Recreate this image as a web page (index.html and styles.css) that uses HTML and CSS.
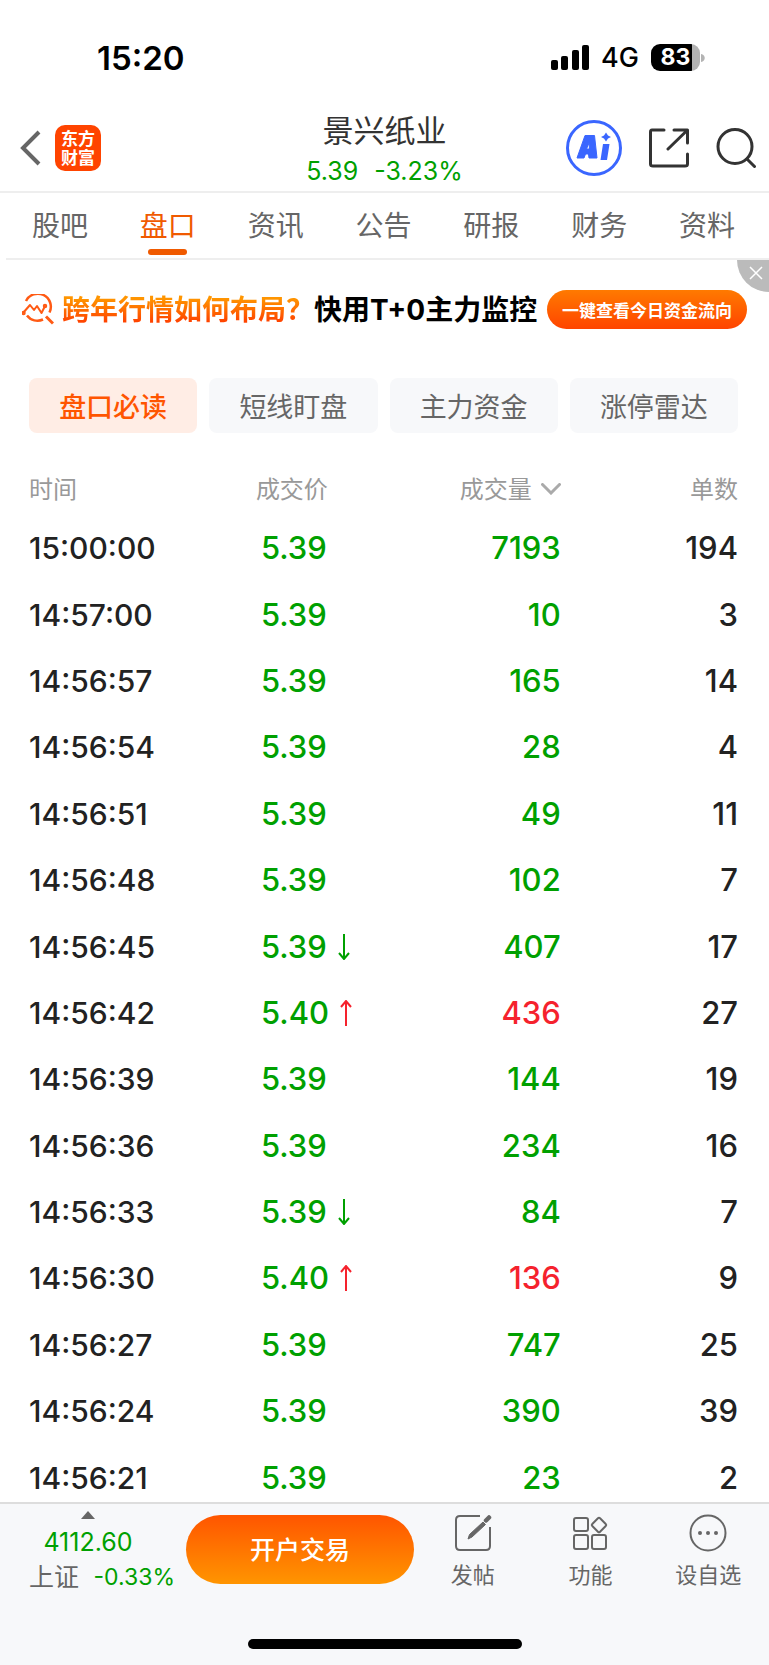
FILE: index.html
```html
<!DOCTYPE html>
<html lang="zh-CN">
<head>
    <meta charset="UTF-8">
    <meta name="viewport" content="width=device-width, initial-scale=1.0">
    <title>景兴纸业 - 盘口</title>
    <link rel="stylesheet" href="styles.css">
</head>
<body>
    <div class="status-bar">
        <span class="clock">15:20</span>
        <div class="status-right">
            <svg width="38" height="25" viewBox="0 0 38 25">
                <rect x="0" y="15" width="7" height="10" rx="2"/>
                <rect x="10" y="11" width="7" height="14" rx="2"/>
                <rect x="21" y="5" width="7" height="20" rx="2"/>
                <rect x="31" y="0" width="7" height="25" rx="2"/>
            </svg>
            <span class="network">4G</span>
            <div class="battery">83</div>
            <svg class="battery-tip" width="4" height="8" viewBox="0 0 4 8"><path d="M0 0C5 1 5 7 0 8Z"/></svg>
        </div>
    </div>

    <header class="header">
        <div class="header-side header-back">
            <button class="icon-btn" aria-label="返回">
                <svg width="22" height="36" viewBox="0 0 22 36" fill="none" stroke="#666" stroke-width="4"><path d="M19 2L3 18L19 34"/></svg>
            </button>
            <a class="logo" href="#">东方<br>财富</a>
        </div>
        <div class="header-title">
            <h1>景兴纸业</h1>
            <p><span>5.39</span><span>-3.23%</span></p>
        </div>
        <div class="header-side header-actions">
            <button class="icon-btn" aria-label="AI">
                <svg width="56" height="56" viewBox="0 0 56 56" fill="#3a66ff">
                    <circle cx="28" cy="28" r="26.5" fill="none" stroke="#3a66ff" stroke-width="3"/>
                    <path fill-rule="evenodd" stroke="#3a66ff" stroke-linejoin="round" d="M19 15.500H28.500L31 38H23L22.500 34H19.500L18 38H11ZM23 23L20.500 29H23.500Z"/>
                    <path d="M37 24H43.500L41 40H34.500ZM40 12.500L42 15.500L45 17L42 18.500L40 21.500L38 18.500L35 17L38 15.500Z"/>
                </svg>
            </button>
            <button class="icon-btn" aria-label="分享">
                <svg width="40" height="40" viewBox="0 0 40 40" fill="none" stroke="#333" stroke-width="3" stroke-linecap="round" stroke-linejoin="round">
                    <path d="M15 2H3Q1.500 2 1.500 4V36Q1.500 38 4 38H36Q38.500 38 38.500 36V26M25 2H38.500V15M38 2.500L19 21"/>
                </svg>
            </button>
            <button class="icon-btn" aria-label="搜索">
                <svg width="40" height="40" viewBox="0 0 40 40" fill="none" stroke="#333" stroke-width="3" stroke-linecap="round">
                    <circle cx="19" cy="18.500" r="17"/><path d="M31 31L38.500 38.500"/>
                </svg>
            </button>
        </div>
    </header>

    <nav class="nav">
        <a href="#">股吧</a>
        <a href="#" class="active">盘口</a>
        <a href="#">资讯</a>
        <a href="#">公告</a>
        <a href="#">研报</a>
        <a href="#">财务</a>
        <a href="#">资料</a>
    </nav>

    <section class="banner">
        <svg width="32" height="31" viewBox="0 0 32 31" fill="none" stroke="#ff5a14" stroke-width="2.500" stroke-linejoin="round">
            <path d="M4 7A13 13 0 0 1 27.500 18.500M5 21.500A13 13 0 0 0 21 25.500"/>
            <path d="M24 22.500L31 29.500" stroke-width="3"/>
            <path d="M1 19L8 11L12 16L15 12L19.500 19L23 12" stroke-width="2"/>
            <circle cx="1.500" cy="19" r="1"/><circle cx="23" cy="12" r="1"/>
        </svg>
        <strong class="banner-hot">跨年行情如何布局？</strong>
        <strong class="banner-text">快用T+0主力监控</strong>
        <button class="banner-btn">一键查看今日资金流向</button>
        <button class="banner-close" aria-label="关闭">
            <svg width="14" height="14" viewBox="0 0 14 14" stroke="#fff" stroke-width="1.500"><path d="M1 1L13 13M13 1L1 13"/></svg>
        </button>
    </section>

    <div class="tabs">
        <button class="active">盘口必读</button>
        <button>短线盯盘</button>
        <button>主力资金</button>
        <button>涨停雷达</button>
    </div>

    <table class="deals">
        <thead>
            <tr>
                <th>时间</th>
                <th>成交价</th>
                <th>成交量<svg class="sort" width="20" height="12" viewBox="0 0 20 12" fill="none" stroke="#aaa" stroke-width="3" stroke-linecap="round"><path d="M1.500 1.500L10 10L18.500 1.500"/></svg></th>
                <th>单数</th>
            </tr>
        </thead>
        <tbody>
            <tr><td>15:00:00</td><td>5.39</td><td>7193</td><td>194</td></tr>
            <tr><td>14:57:00</td><td>5.39</td><td>10</td><td>3</td></tr>
            <tr><td>14:56:57</td><td>5.39</td><td>165</td><td>14</td></tr>
            <tr><td>14:56:54</td><td>5.39</td><td>28</td><td>4</td></tr>
            <tr><td>14:56:51</td><td>5.39</td><td>49</td><td>11</td></tr>
            <tr><td>14:56:48</td><td>5.39</td><td>102</td><td>7</td></tr>
            <tr><td>14:56:45</td><td>5.39<svg class="arrow" width="12" height="26" viewBox="0 0 12 26"><path d="M6 0V25M1 19L6 25L11 19"/></svg></td><td>407</td><td>17</td></tr>
            <tr><td>14:56:42</td><td>5.40<svg class="arrow up" width="12" height="26" viewBox="0 0 12 26"><path d="M6 26V1M1 7L6 1L11 7"/></svg></td><td class="up">436</td><td>27</td></tr>
            <tr><td>14:56:39</td><td>5.39</td><td>144</td><td>19</td></tr>
            <tr><td>14:56:36</td><td>5.39</td><td>234</td><td>16</td></tr>
            <tr><td>14:56:33</td><td>5.39<svg class="arrow" width="12" height="26" viewBox="0 0 12 26"><path d="M6 0V25M1 19L6 25L11 19"/></svg></td><td>84</td><td>7</td></tr>
            <tr><td>14:56:30</td><td>5.40<svg class="arrow up" width="12" height="26" viewBox="0 0 12 26"><path d="M6 26V1M1 7L6 1L11 7"/></svg></td><td class="up">136</td><td>9</td></tr>
            <tr><td>14:56:27</td><td>5.39</td><td>747</td><td>25</td></tr>
            <tr><td>14:56:24</td><td>5.39</td><td>390</td><td>39</td></tr>
            <tr><td>14:56:21</td><td>5.39</td><td>23</td><td>2</td></tr>
        </tbody>
    </table>

    <footer class="footer">
        <div class="toolbar">
            <div class="index">
                <svg width="14" height="8" viewBox="0 0 14 8" fill="#666"><path d="M7 0L14 8H0Z"/></svg>
                <span class="index-value">4112.60</span>
                <div class="index-row"><span class="index-name">上证</span><span class="index-change">-0.33%</span></div>
            </div>
            <button class="trade-btn">开户交易</button>
            <div class="tools">
                <a href="#">
                    <svg width="38" height="38" viewBox="0 0 38 38" fill="none" stroke="#666" stroke-width="2">
                        <path d="M26 2H6Q2 2 2 6V32Q2 36 6 36H32Q36 36 36 32V13"/>
                        <path d="M14 25L15.500 20.500L29 8L31.500 10.500L18 23Z" fill="#666" stroke-width="1"/>
                        <path d="M32 6.500L35 3.500" stroke-width="4.500" stroke-linecap="round"/>
                    </svg>
                    发帖
                </a>
                <a href="#">
                    <svg width="38" height="38" viewBox="0 0 38 38" fill="none" stroke="#666" stroke-width="2">
                        <rect x="3" y="4" width="14" height="13" rx="2"/>
                        <rect x="3" y="21" width="14" height="14" rx="2"/>
                        <rect x="21" y="21" width="14" height="14" rx="2"/>
                        <rect x="22.500" y="5.500" width="11" height="11" rx="1.500" transform="rotate(45 28 11)"/>
                    </svg>
                    功能
                </a>
                <a href="#">
                    <svg width="38" height="38" viewBox="0 0 38 38" fill="#666">
                        <circle cx="19" cy="19" r="17.500" fill="none" stroke="#666" stroke-width="2"/>
                        <circle cx="11" cy="19" r="2"/><circle cx="19" cy="19" r="2"/><circle cx="27" cy="19" r="2"/>
                    </svg>
                    设自选
                </a>
            </div>
        </div>
        <div class="home-bar"></div>
    </footer>
</body>
</html>
```
FILE: styles.css
```css
* {
    box-sizing: border-box;
}
body {
    margin: 0;
    padding-bottom: 154px; /* place for the fixed footer */
    background: #fff;
    color: #222;
    font-family: Inter, "Noto Sans CJK SC", sans-serif;
}
button {
    border: 0;
    padding: 0;
    background: none;
    font-family: inherit;
    cursor: pointer;
}
a {
    text-decoration: none;
}
svg {
    display: block;
    flex: none;
}

/* status bar */
.status-bar {
    display: flex;
    justify-content: space-between;
    align-items: center;
    height: 104px;
    padding: 11px 64px 0 97px;
    color: #000;
}
.clock {
    font-size: 33px;
    font-weight: 600;
}
.status-right {
    display: flex;
    align-items: center;
}
.network {
    margin: 0 12px;
    font-size: 27px;
    font-weight: 500;
}
.battery {
    width: 49px;
    height: 27px;
    border-radius: 9px;
    background: linear-gradient(to right, #000 83%, #b3b3b3 83%);
    color: #fff;
    font-size: 23px;
    font-weight: 700;
    line-height: 27px;
    text-align: center;
}
.battery-tip {
    margin-left: 1px;
    fill: #b3b3b3;
}

/* header */
.header {
    display: flex;
    align-items: center;
    height: 89px;
    padding: 0 13px;
    border-bottom: 2px solid #eee;
}
.header-side {
    display: flex;
    flex: 1;
    align-items: center;
    gap: 13px;
}
.header-back {
    padding-left: 7px;
}
.header-actions {
    justify-content: flex-end;
    gap: 27px;
}
/* both sides share the free space, so the title stays centered */
.header-back,
.header-actions {
    flex-basis: 200px;
}
.logo {
    width: 46px;
    height: 46px;
    padding-top: 5px;
    border-radius: 10px;
    background: #ff4400;
    color: #fff;
    font-size: 17px;
    font-weight: 700;
    line-height: 19px;
    text-align: center;
}
.header-title {
    padding-top: 4px;
    text-align: center;
}
.header-title h1 {
    margin: 0;
    color: #333;
    font-size: 31px;
    font-weight: 400;
    line-height: 42px;
}
.header-title p {
    display: flex;
    justify-content: center;
    gap: 16px;
    margin: 0;
    color: #00a000;
    font-size: 25px;
    line-height: 38px;
}

/* nav */
.nav {
    display: grid;
    grid-template-columns: repeat(7, 1fr);
    height: 67px;
    margin-left: 6px;
    padding-right: 8px;
    border-bottom: 2px solid #eee;
}
.nav a {
    display: flex;
    flex-direction: column;
    align-items: center;
    color: #666;
    font-size: 28px;
    line-height: 66px;
}
.nav .active {
    color: #f05a00;
}
.nav .active::after {
    content: "";
    width: 39px;
    height: 6px;
    margin-top: -10px;
    border-radius: 3px;
    background: #f05a00;
}

/* banner */
.banner {
    position: relative;
    display: flex;
    align-items: center;
    height: 101px;
    padding: 0 22px 2px;
    font-size: 28px;
    line-height: 38px;
}
.banner-hot {
    margin-left: 8px;
    background: linear-gradient(#ff9500 20%, #ff4400 80%);
    background-clip: text;
    -webkit-background-clip: text;
    color: transparent;
}
.banner-text {
    color: #000;
}
.banner-btn {
    width: 200px;
    height: 39px;
    margin-left: auto;
    border-radius: 20px;
    background: linear-gradient(#ff7a00, #ff4400);
    color: #fff;
    font-size: 17px;
    font-weight: 700;
}
.banner-close {
    position: absolute;
    top: 0;
    right: 0;
    width: 32px;
    height: 32px;
    padding: 0 0 7px 12px;
    border-bottom-left-radius: 32px;
    background: #bbb;
}

/* tabs */
.tabs {
    display: grid;
    grid-template-columns: repeat(4, 1fr);
    gap: 12px;
    padding: 17px 31px 32px 29px;
}
.tabs button {
    height: 55px;
    border-radius: 8px;
    background: #f7f8fa;
    color: #666;
    font-size: 27px;
}
.tabs .active {
    background: #ffede5;
    color: #ff5500;
    font-weight: 500;
}

/* deals */
.deals {
    width: calc(100% - 60px);
    height: 1046px;
    margin: 0 31px 0 29px;
    border-collapse: collapse;
    table-layout: fixed;
}
.deals th {
    height: 50px;
    padding: 0 0 5px;
    color: #999;
    font-size: 24px;
    font-weight: 400;
    text-align: left;
}
.deals td {
    padding: 0;
    font-size: 31px;
    font-weight: 500;
    line-height: 40px;
}
.deals td:first-child {
    font-size: 30px;
}
.deals th:nth-child(1) {
    width: 32%;
}
.deals th:nth-child(2) {
    width: 20%;
}
.deals th:nth-child(3) {
    width: 23%;
}
.deals th:nth-child(n+3),
.deals td:nth-child(n+3) {
    text-align: right;
}
.deals td:nth-child(2) {
    padding-left: 5px;
}
.deals td:nth-child(2),
.deals td:nth-child(3) {
    color: #00a000;
}
.deals td.up {
    color: #f5222d;
}
.sort {
    display: inline-block;
    margin-left: 9px;
    vertical-align: 3px;
}
.arrow {
    display: inline-block;
    margin-left: 11px;
    fill: none;
    stroke: #00a000;
    stroke-width: 2;
    vertical-align: -2px;
}
.arrow.up {
    stroke: #f5222d;
}

/* footer */
.footer {
    position: fixed;
    left: 0;
    right: 0;
    bottom: 0;
    height: 163px;
    border-top: 2px solid #ddd;
    background: #f7f8fa;
}
.toolbar {
    display: flex;
    align-items: flex-start;
    height: 135px;
    padding: 0 2px 0 29px;
}
.index {
    display: flex;
    flex-direction: column;
    align-items: center;
    width: 146px;
    padding-top: 7px;
    margin-right: 11px;
}
.index > svg,
.index-value {
    margin-right: 28px;
}
.index-value,
.index-change {
    color: #00a000;
}
.index-value {
    font-size: 25px;
    line-height: 46px;
}
.index-row {
    display: flex;
    align-items: center;
    justify-content: space-between;
    width: 100%;
    line-height: 24px;
}
.index-name {
    color: #666;
    font-size: 25px;
}
.index-change {
    font-size: 23px;
}
.trade-btn {
    width: 228px;
    height: 69px;
    margin-top: 11px;
    padding-bottom: 3px;
    border-radius: 35px;
    background: linear-gradient(#ff5500, #ff9500);
    color: #fff;
    font-size: 25px;
    font-weight: 500;
}
.tools {
    display: grid;
    flex: 1;
    grid-template-columns: repeat(3, 1fr);
    padding-top: 10px;
}
.tools a {
    display: flex;
    flex-direction: column;
    align-items: center;
    color: #666;
    font-size: 22px;
    line-height: 46px;
}
.home-bar {
    width: 274px;
    height: 10px;
    margin: 0 auto;
    border-radius: 5px;
    background: #000;
}
```
